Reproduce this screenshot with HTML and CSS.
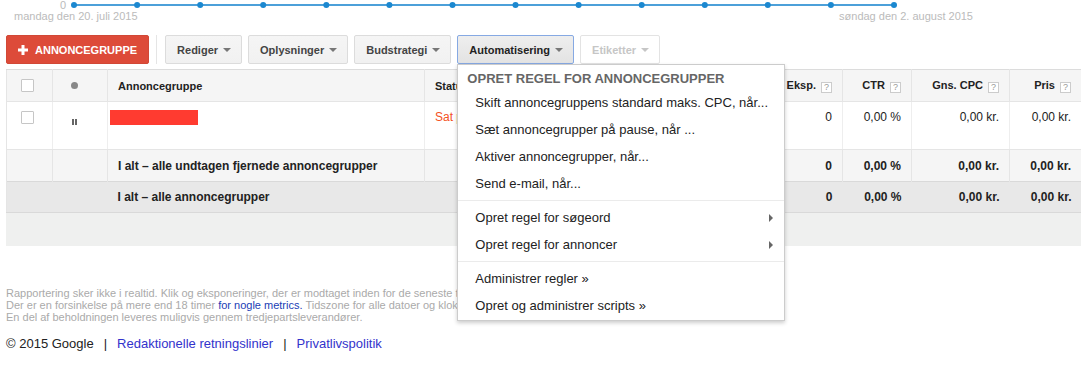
FILE: index.html
```html
<!DOCTYPE html>
<html lang="da">
<head>
  <meta charset="UTF-8">
  <meta name="viewport" content="width=device-width, initial-scale=1.0">
  <title>Annoncegrupper</title>
  <link rel="stylesheet" href="styles.css">
</head>
<body>
  <!-- Graf (nederste del) -->
  <div class="chart">
    <div class="chart-axis">
      <span class="axis-zero">0</span>
      <svg class="chart-line" width="830" height="10" viewBox="0 0 830 10">
        <line x1="4" y1="5" x2="824" y2="5" stroke="#4ca0d9" stroke-width="2"/>
        <g fill="#1b88d0">
          <circle cx="4" cy="5" r="3"/>
          <circle cx="67.1" cy="5" r="3"/>
          <circle cx="130.2" cy="5" r="3"/>
          <circle cx="193.2" cy="5" r="3"/>
          <circle cx="256.3" cy="5" r="3"/>
          <circle cx="319.4" cy="5" r="3"/>
          <circle cx="382.5" cy="5" r="3"/>
          <circle cx="445.5" cy="5" r="3"/>
          <circle cx="508.6" cy="5" r="3"/>
          <circle cx="571.7" cy="5" r="3"/>
          <circle cx="634.8" cy="5" r="3"/>
          <circle cx="697.8" cy="5" r="3"/>
          <circle cx="760.9" cy="5" r="3"/>
          <circle cx="824" cy="5" r="3"/>
        </g>
      </svg>
    </div>
    <div class="chart-dates">
      <span>mandag den 20. juli 2015</span>
      <span>søndag den 2. august 2015</span>
    </div>
  </div>

  <!-- Værktøjslinje -->
  <div class="toolbar">
    <button class="btn btn-primary">
      <svg width="10" height="10" viewBox="0 0 10 10"><path d="M3.5 0h3v3.5H10v3H6.5V10h-3V6.5H0v-3h3.5z" fill="#fff"/></svg>
      ANNONCEGRUPPE
    </button>
    <span class="toolbar-sep"></span>
    <button class="btn">Rediger <span class="caret"></span></button>
    <button class="btn">Oplysninger <span class="caret"></span></button>
    <button class="btn">Budstrategi <span class="caret"></span></button>
    <div class="menu-anchor">
      <button class="btn btn-active">Automatisering <span class="caret"></span></button>

      <!-- Åben menu -->
      <div class="menu">
        <div class="menu-title">OPRET REGEL FOR ANNONCEGRUPPER</div>
        <div class="menu-item">Skift annoncegruppens standard maks. CPC, når...</div>
        <div class="menu-item">Sæt annoncegrupper på pause, når ...</div>
        <div class="menu-item">Aktiver annoncegrupper, når...</div>
        <div class="menu-item">Send e-mail, når...</div>
        <div class="menu-sep"></div>
        <div class="menu-item">Opret regel for søgeord <span class="menu-arrow"></span></div>
        <div class="menu-item">Opret regel for annoncer <span class="menu-arrow"></span></div>
        <div class="menu-sep"></div>
        <div class="menu-item">Administrer regler »</div>
        <div class="menu-item">Opret og administrer scripts »</div>
      </div>
    </div>
    <button class="btn btn-disabled">Etiketter <span class="caret"></span></button>
  </div>

  <!-- Tabel -->
  <div class="grid-wrap">
    <table class="grid">
      <colgroup>
        <col class="col-check">
        <col class="col-state">
        <col class="col-name">
        <col class="col-status">
        <col class="col-clicks">
        <col class="col-impr">
        <col class="col-ctr">
        <col class="col-cpc">
        <col class="col-cost">
      </colgroup>
      <thead>
        <tr>
          <th class="cell-check"><span class="checkbox"></span></th>
          <th class="cell-state"><span class="state-dot"></span></th>
          <th>Annoncegruppe</th>
          <th>Status</th>
          <th class="num">Klik <span class="help">?</span></th>
          <th class="num">Eksp. <span class="help">?</span></th>
          <th class="num">CTR <span class="help">?</span></th>
          <th class="num">Gns. CPC <span class="help">?</span></th>
          <th class="num">Pris <span class="help">?</span></th>
        </tr>
      </thead>
      <tbody>
        <tr class="row-data">
          <td class="cell-check"><span class="checkbox"></span></td>
          <td class="cell-state"><span class="pause-icon"></span></td>
          <td><span class="redacted"></span></td>
          <td class="status-paused">Sat på pause</td>
          <td class="num">0</td>
          <td class="num">0</td>
          <td class="num">0,00 %</td>
          <td class="num">0,00 kr.</td>
          <td class="num">0,00 kr.</td>
        </tr>
        <tr class="row-total">
          <td></td>
          <td></td>
          <td>I alt – alle undtagen fjernede annoncegrupper</td>
          <td></td>
          <td class="num">0</td>
          <td class="num">0</td>
          <td class="num">0,00 %</td>
          <td class="num">0,00 kr.</td>
          <td class="num">0,00 kr.</td>
        </tr>
        <tr class="row-grand">
          <td colspan="2"></td>
          <td>I alt – alle annoncegrupper</td>
          <td></td>
          <td class="num">0</td>
          <td class="num">0</td>
          <td class="num">0,00 %</td>
          <td class="num">0,00 kr.</td>
          <td class="num">0,00 kr.</td>
        </tr>
      </tbody>
    </table>
    <div class="grid-empty"></div>
  </div>

  <!-- Bemærkninger og sidefod -->
  <div class="notes">
    <div>Rapportering sker ikke i realtid. Klik og eksponeringer, der er modtaget inden for de seneste tre timer, vises muligvis ikke her.</div>
    <div>Der er en forsinkelse på mere end 18 timer <a href="#">for nogle metrics.</a> Tidszone for alle datoer og klokkeslæt: (GMT+02:00) Centraleuropæisk tid.</div>
    <div>En del af beholdningen leveres muligvis gennem tredjepartsleverandører.</div>
  </div>

  <div class="footer">
    <span>© 2015 Google</span>
    <span class="footer-sep">|</span>
    <a href="#">Redaktionelle retningslinier</a>
    <span class="footer-sep">|</span>
    <a href="#">Privatlivspolitik</a>
  </div>
</body>
</html>
```

FILE: styles.css
```css
/* 1. Generelt */
* {
  margin: 0;
  padding: 0;
  box-sizing: border-box;
}

body {
  font-family: "Liberation Sans", Arial, sans-serif;
  color: #222;
  background: #fff;
  overflow: hidden;
}

/* 2. Graf */
.chart {
  height: 22px;
}

.chart-axis {
  display: flex;
  align-items: center;
  height: 10px;
}

.axis-zero {
  width: 66px;
  text-align: right;
  font-size: 11px;
  line-height: 12px;
  color: #bbb;
}

.chart-line {
  display: block;
  margin-left: 4px;
}

.chart-dates {
  display: flex;
  justify-content: space-between;
  width: 973px;
  padding-left: 14px;
  font-size: 11px;
  line-height: 12px;
  color: #bbb;
}

/* 3. Værktøjslinje */
.toolbar {
  display: flex;
  align-items: center;
  height: 29px;
  margin-top: 13px;
  padding-left: 6px;
}

.btn {
  display: flex;
  align-items: center;
  gap: 5px;
  height: 29px;
  margin-right: 6px;
  padding: 0 10px 0 11px;
  font-family: inherit;
  font-size: 11px;
  font-weight: bold;
  color: #444;
  background: linear-gradient(#f5f5f5, #f1f1f1);
  border: 1px solid #dcdcdc;
  border-radius: 2px;
  cursor: pointer;
}

.caret {
  width: 0;
  height: 0;
  border-top: 4px solid #777;
  border-left: 4px solid transparent;
  border-right: 4px solid transparent;
}

.btn-primary {
  gap: 7px;
  margin-right: 7px;
  padding: 0 11px 0 11px;
  color: #fff;
  background: #dd4b39;
  border-color: #d14836;
}

.btn-active {
  color: #222;
  background: linear-gradient(#eee, #e3e3e3);
  border-color: #86a9e3;
}

.btn-disabled {
  color: #c6c6c6;
  background: #fff;
  border-color: #e3e3e3;
  cursor: default;
}

.btn-disabled .caret {
  border-top-color: #c6c6c6;
}

.toolbar-sep {
  width: 1px;
  height: 29px;
  margin-right: 8px;
  background: #e5e5e5;
}

/* 4. Dropdown-menu */
.menu-anchor {
  position: relative;
}

.menu {
  position: absolute;
  top: 100%;
  left: 0;
  z-index: 10;
  width: 328px;
  padding: 3px 0 1px;
  font-size: 13px;
  color: #222;
  background: #fff;
  border: 1px solid rgba(0, 0, 0, 0.2);
  box-shadow: 0 2px 4px rgba(0, 0, 0, 0.2);
}

.menu-title {
  padding-left: 9px;
  line-height: 21px;
  font-weight: bold;
  color: #666;
}

.menu-item {
  display: flex;
  align-items: center;
  justify-content: space-between;
  height: 27px;
  padding: 0 11px 0 17px;
  white-space: nowrap;
}

.menu-arrow {
  width: 0;
  height: 0;
  border-left: 4px solid #666;
  border-top: 4px solid transparent;
  border-bottom: 4px solid transparent;
}

.menu-sep {
  margin: 3px 0;
  border-top: 1px solid #ebebeb;
}

/* 5. Tabel */
.grid-wrap {
  width: 1075px;
  margin: 5px 0 0 6px;
}

.grid {
  width: 1075px;
  border-collapse: collapse;
  table-layout: fixed;
  font-size: 12px;
}

.col-check { width: 46px; }
.col-state { width: 55px; }
.col-name { width: 317px; }
.col-status { width: 176px; }
.col-clicks { width: 160px; }
.col-impr { width: 82px; }
.col-ctr { width: 69px; }
.col-cpc { width: 98px; }
.col-cost { width: 72px; }

.grid th {
  height: 32px;
  padding: 0 10px;
  font-size: 11px;
  font-weight: bold;
  text-align: left;
  white-space: nowrap;
  background: #f5f5f5;
  border: 1px solid #e5e5e5;
  border-top-color: #dcdcdc;
}

.grid td {
  padding: 0 10px;
  line-height: 14px;
  white-space: nowrap;
  overflow: hidden;
  border-left: 1px solid #eee;
  border-right: 1px solid #eee;
}

.grid .num {
  text-align: right;
}

.grid td:first-child,
.grid th:first-child {
  border-left: 1px solid #e5e5e5;
}

.help {
  display: inline-block;
  width: 11px;
  height: 11px;
  margin-left: 2px;
  font-size: 9px;
  line-height: 9px;
  font-weight: normal;
  text-align: center;
  vertical-align: -1px;
  color: #999;
  background: #fff;
  border: 1px solid #ccc;
}

.cell-check {
  padding-left: 14px !important;
}

.cell-state {
  padding-left: 18px !important;
}

.checkbox {
  display: block;
  width: 13px;
  height: 13px;
  background: #fff;
  border: 1px solid #c6c6c6;
  border-radius: 1px;
}

.state-dot {
  display: block;
  width: 7px;
  height: 7px;
  background: #888;
  border-radius: 50%;
}

.row-data td {
  height: 48px;
  padding-top: 8px;
  vertical-align: top;
  border-bottom: 1px solid #e5e5e5;
}

.row-data .checkbox {
  margin-top: 1px;
}

.pause-icon {
  display: block;
  width: 5px;
  height: 6px;
  margin: 9px 0 0 1px;
  border-left: 2px solid #666;
  border-right: 2px solid #666;
}

.redacted {
  display: block;
  width: 88px;
  height: 15px;
  margin-left: -8px;
  background: #ff3b30;
}

.status-paused {
  color: #f4511e;
}

.row-total td {
  height: 32px;
  font-weight: bold;
  background: #f5f5f5;
  border-color: #e5e5e5;
}

.row-grand td {
  height: 31px;
  font-weight: bold;
  background: #e8e8e8;
  border-top: 1px solid #d9d9d9;
  border-bottom: 1px solid #d9d9d9;
  border-left: none;
  border-right: none;
}

.row-grand td:first-child {
  border-left: 1px solid #e5e5e5;
}

.grid-empty {
  height: 33px;
  background: #eff0ef;
}

/* 6. Bemærkninger */
.notes {
  margin: 41px 0 0 6px;
  font-size: 11px;
  line-height: 12px;
  color: #aaa;
  white-space: nowrap;
}

.notes a {
  color: #1a3db5;
  text-decoration: none;
}

/* 7. Sidefod */
.footer {
  display: flex;
  margin: 13px 0 0 6px;
  font-size: 13px;
  line-height: 15px;
}

.footer a {
  color: #3333cc;
  text-decoration: none;
}

.footer-sep {
  margin: 0 10px;
}
```
